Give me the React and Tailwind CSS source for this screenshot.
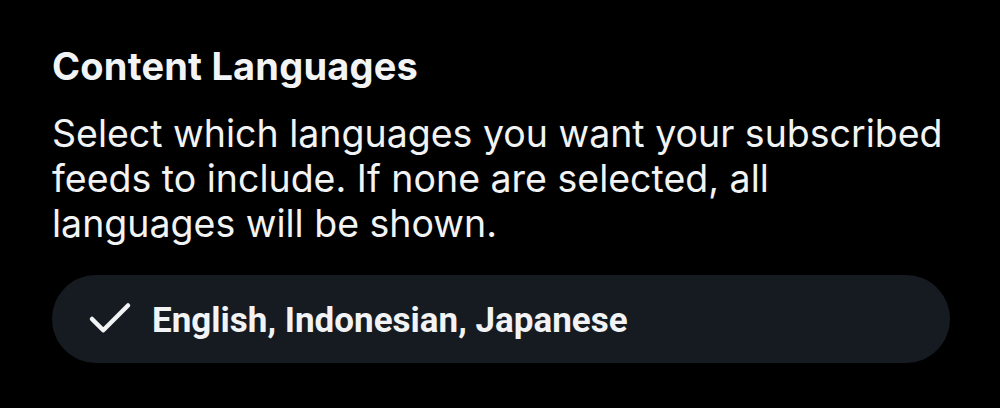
import { Check } from "lucide-react";

export default function App() {
  return (
    <div className="h-[408px] w-[1000px] bg-black px-[52px] pt-[43px] text-[#f1f3f5]">
      <h1 className="font-['Inter',sans-serif] text-[38px] font-bold leading-[46px] tracking-[0.2px]">Content Languages</h1>
      <p className="mt-[22px] w-[896px] font-['Inter',sans-serif] text-[37.5px] leading-[45px]">
        Select which languages you want your subscribed feeds to include. If none are selected, all languages will be shown.
      </p>
      <button className="mt-[29px] flex h-[88px] w-[898px] items-center gap-[15px] rounded-full bg-[#161b21] pl-[31px] text-[#f1f3f5]">
        <Check size={54} strokeWidth={2} />
        <span className="mt-[4px] font-['Roboto',sans-serif] text-[35px] font-bold">English, Indonesian, Japanese</span>
      </button>
    </div>
  );
}
